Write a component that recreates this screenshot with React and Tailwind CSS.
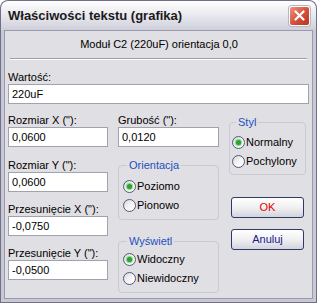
import React from 'react';

function Radio({ label, checked }) {
    return (
        <div className="flex items-center h-[19px]">
            <span className="w-[13px] h-[13px] rounded-full border border-[#4f5b78] bg-gradient-to-br from-[#d6d6dc] via-[#f4f4f6] to-white flex items-center justify-center mr-[1px] shrink-0">
                {checked && <span className="w-[5px] h-[5px] rounded-full bg-[#2ea12e] shadow-[0_0_1px_1px_#7fd37f]" />}
            </span>
            <span>{label}</span>
        </div>
    );
}

function Field({ label, value, className = '' }) {
    return (
        <div className={className}>
            <div className="leading-[14px] h-[14px]">{label}</div>
            <input
                type="text"
                defaultValue={value}
                className="block w-full h-[20px] border border-[#9ea3ad] bg-white px-[3px] outline-none leading-[18px]"
            />
        </div>
    );
}

function Group({ title, className = '', children }) {
    return (
        <fieldset className={`border border-[#c9c9d1] rounded-[4px] px-[4px] ${className}`}>
            <legend className="ml-[4px] px-[2px] leading-[14px] text-[#1e4fc2]">{title}</legend>
            {children}
        </fieldset>
    );
}

export default function App() {
    return (
        <div className="w-[317px] h-[303px] bg-[#6f6f88] p-[1px] rounded-t-[8px] flex flex-col font-['Liberation_Sans',Arial,sans-serif] text-[11px] text-black">
            {/* title bar */}
            <div className="h-[29px] shrink-0 rounded-t-[7px] bg-gradient-to-b from-white via-[#e8e8ee] to-[#cfcfdb] flex items-center pl-[7px] pr-[6px]">
                <span className="font-bold text-[13px] text-[#1a1a1a] flex-1">Właściwości tekstu (grafika)</span>
                <button className="w-[21px] h-[20px] rounded-[3px] border border-white bg-gradient-to-br from-[#ec9482] via-[#d6533f] to-[#b9301f] flex items-center justify-center shadow-[0_0_0_1px_#b7b7c4]">
                    <svg width="11" height="11" viewBox="0 0 11 11">
                        <path d="M1.5 1.5 L9.5 9.5 M9.5 1.5 L1.5 9.5" stroke="white" strokeWidth="2.2" strokeLinecap="round" />
                    </svg>
                </button>
            </div>

            {/* body */}
            <div className="flex-1 bg-[#c9c9d6] px-[3px] pb-[3px]">
                <div className="h-full bg-[#e0dfe3] border border-[#9a9aae] pl-[3px] pr-[2px]">
                    <div className="h-[27px] flex items-center justify-center">Moduł C2 (220uF) orientacja 0,0</div>
                    <div className="ml-[2px] mr-[3px] border-t border-[#9d9da8] border-b border-b-white" />

                    <Field label="Wartość:" value="220uF" className="mt-[10px] mr-[1px]" />

                    <div className="flex mt-[9px]">
                        <div className="w-[100px] shrink-0">
                            <Field label='Rozmiar X ("):' value="0,0600" />
                            <Field label='Rozmiar Y ("):' value="0,0600" className="mt-[11px]" />
                            <Field label='Przesunięcie X ("):' value="-0,0750" className="mt-[10px]" />
                            <Field label='Przesunięcie Y ("):' value="-0,0500" className="mt-[10px]" />
                        </div>

                        <div className="w-[101px] shrink-0 ml-[10px]">
                            <Field label='Grubość ("):' value="0,0120" />
                            <Group title="Orientacja" className="mt-[11px] pt-[5px] pb-[4px]">
                                <Radio label="Poziomo" checked />
                                <Radio label="Pionowo" />
                            </Group>
                            <Group title="Wyświetl" className="mt-[14px] pt-[2px] pb-[4px]">
                                <Radio label="Widoczny" checked />
                                <Radio label="Niewidoczny" />
                            </Group>
                        </div>

                        <div className="w-[77px] shrink-0 ml-[10px]">
                            <Group title="Styl" className="mt-[2px] pt-[4px] pb-[3px] pl-[2px]">
                                <Radio label="Normalny" checked />
                                <Radio label="Pochylony" />
                            </Group>
                            <button className="block ml-[2px] mt-[22px] w-[73px] h-[21px] rounded-[3px] border border-[#2c3a64] bg-gradient-to-b from-white via-[#f0f0f3] to-[#d3d3dc] text-[#e00000]">OK</button>
                            <button className="block ml-[2px] mt-[11px] w-[73px] h-[21px] rounded-[3px] border border-[#2c3a64] bg-gradient-to-b from-white via-[#f0f0f3] to-[#d3d3dc] text-[#1a1a8a]">Anuluj</button>
                        </div>
                    </div>
                </div>
            </div>
        </div>
    );
}
